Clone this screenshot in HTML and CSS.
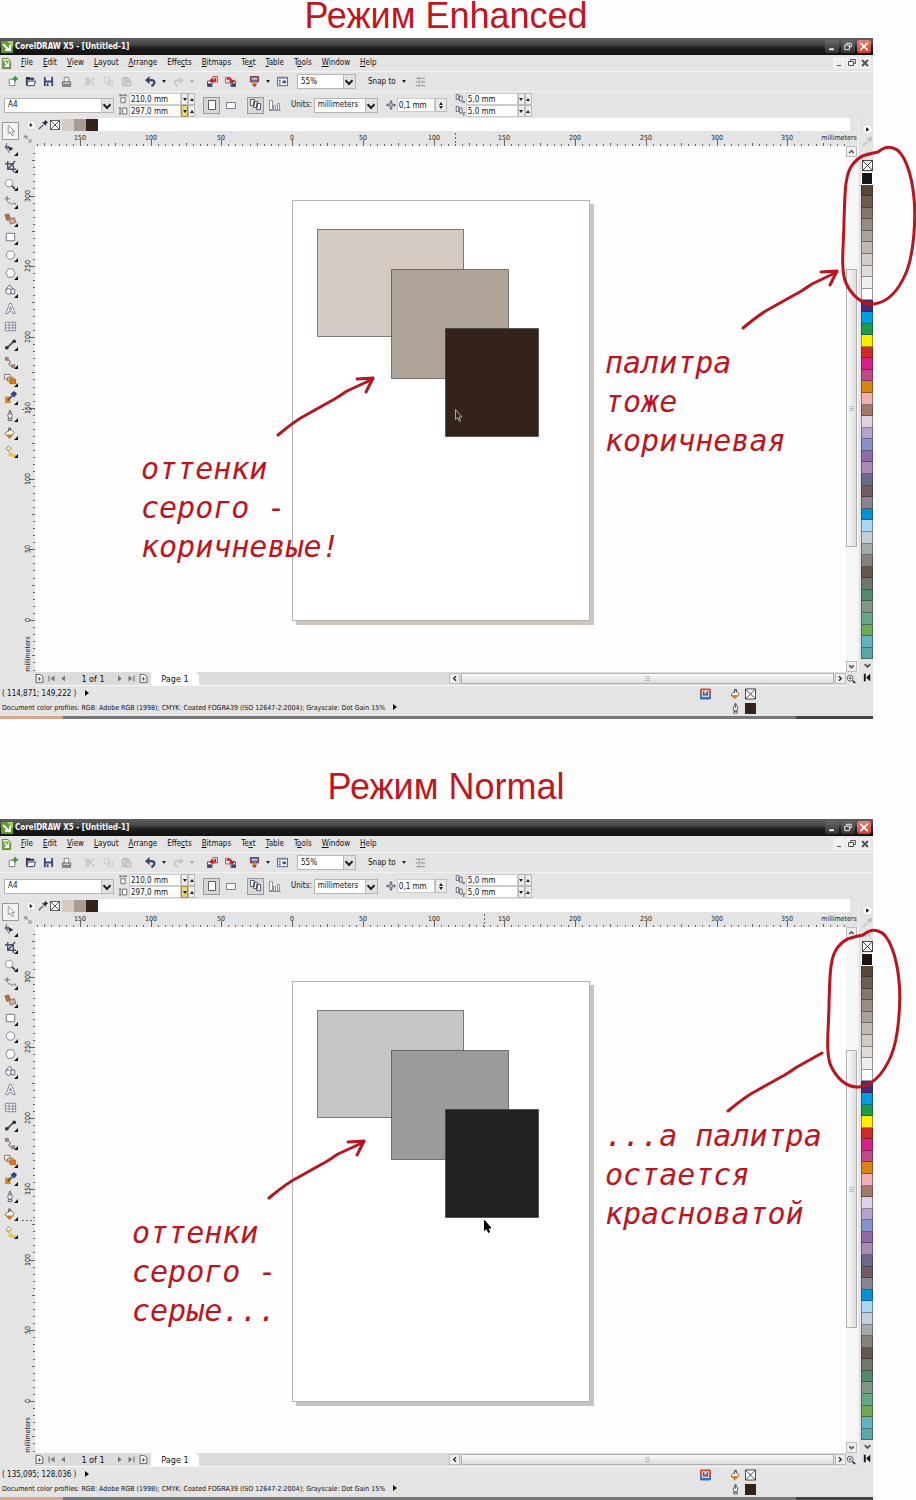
FILE: index.html
```html
<!DOCTYPE html>
<html lang="ru">
<head>
<meta charset="utf-8">
<meta name="viewport" content="width=device-width, initial-scale=1">
<title>CorelDRAW X5: Enhanced / Normal</title>
<link rel="stylesheet" href="styles.css">
</head>
<body>
<svg class="sprite" aria-hidden="true">
  <symbol id="i-app" viewBox="0 0 12 12"><path fill="#5f9a2c" d="M0 0h12v12H0z"/><path fill="#a8d36b" d="M6 0h6v7z"/><path fill="none" stroke="#fff" stroke-width="2" d="M2 3l6 6M9 4v5H4"/></symbol>
  <symbol id="i-doc" viewBox="0 0 12 12"><path fill="#dcebc8" stroke="#5c7a3a" d="M1.500 .5h6l3 3v8h-9z"/><path fill="#6fa83a" d="M2 3h6l2 3v5H2z"/><path fill="none" stroke="#fff" stroke-width="1.500" d="M4 4l3 4M8 5v4H4"/></symbol>
  <symbol id="i-new" viewBox="0 0 12 12"><path fill="#fff" stroke="#777" d="M2.500 3.500h6v7h-6z"/><path fill="#2f9c3a" d="M8 0h2v2h2v2h-2v2H8V4H6V2h2z"/></symbol>
  <symbol id="i-open" viewBox="0 0 12 12"><path fill="#2c3350" d="M1 1h4l1 1h4v2H3l-1 6H1z"/><path fill="#f5f6fa" stroke="#2c3350" d="M3.500 5.500h8l-1.500 5H2z"/></symbol>
  <symbol id="i-save" viewBox="0 0 12 12"><path fill="#3d4670" d="M1 1h10v10H1z"/><path fill="#e9ebf2" d="M3 1h6v4H3zM3 7h6v4H3z"/><path fill="#3d4670" d="M4 8h2v3H4z"/></symbol>
  <symbol id="i-print" viewBox="0 0 12 12"><path fill="#fff" stroke="#777" d="M3.500 6.500v-5h5v5"/><path fill="#cfcfcf" stroke="#555" d="M1.500 6.500h9v3h-9z"/><path stroke="#333" d="M1 11h10"/></symbol>
  <symbol id="i-cut" viewBox="0 0 12 12"><g fill="none" stroke="#c4c4c4" stroke-width="1.500"><path d="M3 7l7-5M3 4l7 6"/><circle cx="2.500" cy="3.500" r="1.500"/><circle cx="2.500" cy="8.500" r="1.500"/></g></symbol>
  <symbol id="i-copy" viewBox="0 0 12 12"><g fill="#e4e4e4" stroke="#c8c8c8"><path d="M1.500 1.500h5v6h-5zM5.500 4.500h5v6h-5z"/><path d="M7 6.500h2M7 8.500h2"/></g></symbol>
  <symbol id="i-paste" viewBox="0 0 12 12"><path fill="#d0d0d0" stroke="#b5b5b5" d="M1.500 2.500h7v8h-7z"/><path fill="#e8e8e8" stroke="#aaa" d="M5.500 5.500h5v5h-5z"/><path stroke="#aaa" d="M3 1.500h4M7 7.500h2"/></symbol>
  <symbol id="i-undo" viewBox="0 0 12 12"><path fill="none" stroke="#3c4568" stroke-width="2.500" d="M4 4.500h3q4 0 3 3.500-.5 2-3 3"/><path fill="#3c4568" d="M0 4.500L5 0v9z"/></symbol>
  <symbol id="i-redo" viewBox="0 0 12 12"><path fill="none" stroke="#c6c6c6" stroke-width="2" d="M8 4.500H5q-4 0-3 3.500 1 2 3 3"/><path fill="#c6c6c6" d="M12 4.500L7 1v7z"/></symbol>
  <symbol id="i-import" viewBox="0 0 12 12"><path fill="#fff" stroke="#3c4568" d="M.5 5.500h5v6h-5z"/><path fill="#3c4568" d="M1 8h4v3H1z"/><path fill="#fff" stroke="#b33" d="M6.500 .5h5v6h-5z"/><path fill="none" stroke="#c8202a" stroke-width="2" d="M9 2v3H4M6 3L4 5l2 2"/></symbol>
  <symbol id="i-export" viewBox="0 0 12 12"><path fill="#fff" stroke="#b33" d="M.5 1.500h5v6h-5z"/><path fill="#fff" stroke="#3c4568" d="M6.500 5.500h5v6h-5z"/><path fill="#3c4568" d="M7 8h4v3H7z"/><path fill="none" stroke="#c8202a" stroke-width="2" d="M2 4q4-3 6 2M5.500 5.500L8 7l2-2.500"/></symbol>
  <symbol id="i-launch" viewBox="0 0 12 12"><path fill="#4a6fc0" stroke="#8b2a2a" d="M1.500 .5h9v6h-9z"/><path fill="#b5c8ee" d="M3 2h6v2H3z"/><path fill="#e58a1e" d="M4 6h4v3H4z"/><path fill="#c8202a" d="M3 9h6l-3 3z"/></symbol>
  <symbol id="i-welcome" viewBox="0 0 12 12"><path fill="#fff" stroke="#4a5480" d="M.5 1.500h11v9H.5z"/><path fill="#7d86ad" d="M1 1h10v2H1z"/><path fill="#4a5480" d="M6 5h4v3H6zM2 4h2v2H2zM2 7h2v2H2z"/></symbol>
  <symbol id="i-options" viewBox="0 0 12 12"><path fill="none" stroke="#888" d="M1 2.500h3M6 2.500h5M1 6.500h5M8 6.500h3M1 10.500h3M6 10.500h5M4.500 1v4M7.500 5v3M4.500 8v4"/></symbol>
  <symbol id="i-w" viewBox="0 0 12 12"><path fill="#fff" stroke="#555" d="M3.500 4.500h5v6h-5z"/><path stroke="#555" d="M2 1.500h8M2.500 0v3M9.500 0v3"/></symbol>
  <symbol id="i-h" viewBox="0 0 12 12"><path fill="#fff" stroke="#555" d="M5.500 2.500h5v7h-5z"/><path stroke="#555" d="M2.500 2v8M1 2.500h3M1 9.500h3"/></symbol>
  <symbol id="i-portrait" viewBox="0 0 12 12"><path fill="#fff" stroke="#555b70" d="M2.500 1.500h7v9h-7z"/></symbol>
  <symbol id="i-landscape" viewBox="0 0 12 12"><path fill="#fff" stroke="#777b8c" d="M1.500 3.500h9v6h-9z"/></symbol>
  <symbol id="i-pages" viewBox="0 0 12 12"><path fill="#fff" stroke="#555b70" d="M.5 .5h4v6h-4zM3.500 2.500h4v6h-4zM6.500 4.500h4v6h-4z"/></symbol>
  <symbol id="i-bars" viewBox="0 0 12 12"><path fill="#fff" stroke="#8a8e9c" d="M.5 1.500h3v9h-3zM4.500 6.500h2v4h-2zM8.500 4.500h2v6h-2zM0 11.500h12"/></symbol>
  <symbol id="i-nudge" viewBox="0 0 12 12"><path fill="#fff" stroke="#444b66" d="M4.500 4.500h3v3h-3z"/><path fill="#444b66" d="M6 0l2 3H4zM6 12l2-3H4zM0 6l3-2v4zM12 6L9 4v4z"/></symbol>
  <symbol id="i-dupx" viewBox="0 0 12 12"><path fill="#fff" stroke="#444b66" d="M1.500 .5h3v6h-3zM5.500 2.500h3v6h-3z"/><path fill="none" stroke="#444b66" d="M9 8l3 3M12 8l-3 3"/></symbol>
  <symbol id="i-dupy" viewBox="0 0 12 12"><path fill="#fff" stroke="#444b66" d="M1.500 .5h3v6h-3zM5.500 2.500h3v6h-3z"/><path fill="none" stroke="#444b66" d="M9 7l1.500 2L12 7M10.500 9v3"/></symbol>
  <symbol id="i-nocolor" viewBox="0 0 12 12"><path fill="#fff" stroke="#333" d="M.5 .5h11v11H.5zM.5 .5l11 11M11.500 .5l-11 11"/></symbol>
  <symbol id="i-dropper" viewBox="0 0 12 12"><path stroke="#6b7086" stroke-width="2" d="M1 11l5-5"/><path fill="#222a48" d="M5 3l4 4 1-1-1-1 3-2-3-3-2 3-1-1z"/></symbol>
  <symbol id="i-play" viewBox="0 0 12 12"><circle cx="6" cy="6" r="5.500" fill="#fafafa" stroke="#d2d2d2"/><path fill="#111" d="M4.500 3.500L8 6 4.500 8.500z"/></symbol>
  <symbol id="i-origin" viewBox="0 0 12 12"><path fill="none" stroke="#444" d="M1 3.500h6M3.500 1v6M5 5l5 5M7 10.500h4M10.500 7v4" stroke-dasharray="2 1"/></symbol>
  <symbol id="i-addpage" viewBox="0 0 12 12"><path fill="#fff" stroke="#333" d="M1.500 .5h5l4 3v8h-9z"/><path stroke="#333" d="M3.500 6.500h5M6 4v5"/></symbol>
  <symbol id="i-first" viewBox="0 0 12 12"><path fill="#777" d="M2 2h1.500v8H2zM10 2v8L5 6z"/></symbol>
  <symbol id="i-prev" viewBox="0 0 12 12"><path fill="#777" d="M8 2v8L3 6z"/></symbol>
  <symbol id="i-next" viewBox="0 0 12 12"><path fill="#777" d="M4 2v8l5-4z"/></symbol>
  <symbol id="i-last" viewBox="0 0 12 12"><path fill="#777" d="M8.500 2H10v8H8.500zM2 2v8l5-4z"/></symbol>
  <symbol id="i-flip" viewBox="0 0 12 12"><path fill="#111" d="M2 2h2v8H2zM9 2v8L4.500 6z"/></symbol>
  <symbol id="i-up" viewBox="0 0 12 12"><path fill="none" stroke="#555" stroke-width="2" d="M3 8l3-3 3 3"/></symbol>
  <symbol id="i-down" viewBox="0 0 12 12"><path fill="none" stroke="#555" stroke-width="2" d="M3 4.500l3 3 3-3"/></symbol>
  <symbol id="i-left" viewBox="0 0 12 12"><path fill="none" stroke="#333" stroke-width="2" d="M8 3L5 6l3 3"/></symbol>
  <symbol id="i-right" viewBox="0 0 12 12"><path fill="none" stroke="#333" stroke-width="2" d="M4 3l3 3-3 3"/></symbol>
  <symbol id="i-zoom" viewBox="0 0 12 12"><circle cx="5" cy="5" r="3.500" fill="#fff" stroke="#445"/><path stroke="#334" stroke-width="2" d="M8 8l3 3"/><path stroke="#445" d="M3 5h4M5 3v4"/></symbol>
  <symbol id="i-fill" viewBox="0 0 12 12"><path fill="#fff" stroke="#8a5a24" d="M1 7l5-5 4 4-5 5z"/><path fill="#d98324" d="M2 7h8l-5 5z"/><path fill="none" stroke="#444" d="M5 5V1h2v3"/></symbol>
  <symbol id="i-pen" viewBox="0 0 12 12"><path fill="#fff" stroke="#4c5268" d="M6 .5L8.500 6 7.500 9h-3l-1-3zM4 9.500h4v2H4zM6 2v4"/></symbol>
  <symbol id="i-info" viewBox="0 0 12 12"><path fill="#d2442c" d="M1 0h10l1 1v5H0V1z"/><path fill="#3d6fb8" d="M0 6h12v5l-1 1H1l-1-1z"/><path fill="#fff" d="M2 2h8v7H2z"/><path fill="#3355a0" d="M3 3h2v5H3zM7 3h2v5H7z"/><path fill="#d2442c" d="M5 5h2v3H5z"/></symbol>

  <symbol id="t-pick" viewBox="0 0 14 14"><path fill="#fff" stroke="#8b8e99" d="M4.500 1.500v9l2-2 2 4 2-1-2-3.500h3z"/></symbol>
  <symbol id="t-shape" viewBox="0 0 14 14"><path fill="none" stroke="#666b80" d="M3 1q-2 5 3 11"/><path fill="#2c3350" d="M4 4l6 3-4 3z"/><path fill="#fff" stroke="#2c3350" d="M1.500 4.500h2v2h-2z"/></symbol>
  <symbol id="t-crop" viewBox="0 0 14 14"><path fill="none" stroke="#4a516c" stroke-width="1.500" d="M4 1v9h9M1 4h9v9M12 1L4 10"/></symbol>
  <symbol id="t-zoom" viewBox="0 0 14 14"><circle cx="5.500" cy="5.500" r="4" fill="#fff" stroke="#8c90a0"/><path stroke="#444b66" stroke-width="2" d="M8.500 8.500l3.500 3.500"/></symbol>
  <symbol id="t-free" viewBox="0 0 14 14"><path fill="none" stroke="#666b80" d="M3.500 0v6M.5 3h6M4 8q2-2 3 0t3 0 3 2"/></symbol>
  <symbol id="t-smart" viewBox="0 0 14 14"><path fill="#c06a3a" stroke="#7c6a62" d="M1 2l4-1 2 5-4 2z"/><path fill="#d9a98a" stroke="#84716a" d="M5 7l6-2 2 5-6 2z"/></symbol>
  <symbol id="t-rect" viewBox="0 0 14 14"><path fill="#fff" stroke="#6c7082" d="M2.500 2.500h9v8h-9z"/></symbol>
  <symbol id="t-ellipse" viewBox="0 0 14 14"><circle cx="7" cy="6.500" r="4.500" fill="#fff" stroke="#7c8092"/></symbol>
  <symbol id="t-poly" viewBox="0 0 14 14"><path fill="#fff" stroke="#7c8092" d="M4.500 2h5L12 6.500 9.500 11h-5L2 6.500z"/></symbol>
  <symbol id="t-basic" viewBox="0 0 14 14"><path fill="#fff" stroke="#5c6178" d="M6 1l4 5H2z"/><circle cx="5" cy="8" r="3" fill="#fff" stroke="#5c6178"/><path fill="#fff" stroke="#5c6178" d="M7.500 5.500h4v5h-4z"/></symbol>
  <symbol id="t-text" viewBox="0 0 14 14"><path fill="#fff" stroke="#777c92" d="M6 1.500h2l4 11H9.500L8.500 10h-3l-1 2.500H2zM7 5L6 8h2z"/></symbol>
  <symbol id="t-table" viewBox="0 0 14 14"><path fill="#fff" stroke="#7c8098" d="M1.500 2.500h11v9h-11zM2 5.500h10M2 8.500h10M5.500 3v8M9.500 3v8"/></symbol>
  <symbol id="t-dim" viewBox="0 0 14 14"><path stroke="#555" stroke-width="2" d="M3 11l8-8"/><circle cx="3" cy="10.500" r="2" fill="#333"/><circle cx="11" cy="3.500" r="2" fill="#333"/></symbol>
  <symbol id="t-conn" viewBox="0 0 14 14"><path fill="none" stroke="#555" d="M3 3l4 3-2 3 4 3"/><path fill="#d88a5a" stroke="#777" d="M1.500 1.500h3v3h-3zM8.500 9.500h3v3h-3z"/></symbol>
  <symbol id="t-blend" viewBox="0 0 14 14"><path fill="#fff" stroke="#866" d="M.5 1.500h6v5h-6z"/><path fill="#f0b860" stroke="#966" d="M3.500 4.500h6v4h-6z"/><path fill="#d97a10" stroke="#b56a10" d="M6.500 6.500h6v5h-6z"/></symbol>
  <symbol id="t-drop" viewBox="0 0 14 14"><path fill="#e08a1a" d="M1 6h6v7H1z"/><path stroke="#556" stroke-width="2" d="M4 10l5-5"/><path fill="#27408b" d="M7 3l4 4 3-4-3-3z"/></symbol>
  <symbol id="t-outline" viewBox="0 0 14 14"><path fill="#fff" stroke="#555a70" d="M6.500 1L9 7l-1 3H5L4 7zM4.500 10.500h4v2h-4zM6.500 3v4"/></symbol>
  <symbol id="t-fill" viewBox="0 0 14 14"><path fill="#fff" stroke="#8a5a24" d="M1 7l6-5 4 4-5 6z"/><path fill="#c87a2a" d="M2 8h8l-4 5z"/><path fill="none" stroke="#555" d="M5 5V1h2v3"/></symbol>
  <symbol id="t-ifill" viewBox="0 0 14 14"><path fill="#fff" stroke="#777" d="M2 4l3-3 3 3-3 3z"/><path fill="#e7c34a" d="M2 4h6L5 7zM5 8h4v4H5zM9 10h4v3H9z"/></symbol>
</svg>

<main class="comparison">
  <section class="mode">
    <h1 class="mode-title">Режим Enhanced</h1>
    <div class="stage">
      <div class="window" data-theme="warm" data-coords="( 114,871; 149,222 )" data-cursor-x="420" data-cursor-y="263" data-cursor-style="light"></div>
      <svg class="marks" aria-hidden="true">
        <path d="M878 114C868 116 860 117 853 126C844 136 845 160 844 182C844 205 840 232 846 245C851 256 861 267 874 266C890 264 900 249 906 235C914 216 916 180 914 160C912 138 905 113 893 110C886 108 882 111 878 114"/>
        <path d="M278 397C289 388 296 382 306 377L331 363C337 360 342 356 347 353L373 341M357 341L373 340L366 354"/>
        <path d="M743 290C754 281 761 275 771 270L796 256C802 253 807 249 812 246L837 234M821 234L837 233L830 247"/>
      </svg>
      <p class="note note-shades">оттенки<br>серого -<br>коричневые!</p>
      <p class="note note-palette">палитра<br>тоже<br>коричневая</p>
    </div>
  </section>

  <section class="mode mode-normal">
    <h2 class="mode-title">Режим Normal</h2>
    <div class="stage">
      <div class="window" data-theme="neutral" data-coords="( 135,095; 128,036 )" data-cursor-x="449" data-cursor-y="293" data-cursor-style="dark"></div>
      <svg class="marks" aria-hidden="true">
        <path d="M863 116C853 118 845 119 838 128C829 138 830 162 829 184C829 207 825 234 831 247C836 258 846 269 859 268C875 266 885 251 891 237C899 218 901 182 899 162C897 140 890 115 878 112C871 110 867 113 863 116"/>
        <path d="M269 379C280 370 287 364 297 359L322 345C328 342 333 338 338 335L364 323M348 323L364 322L357 336"/>
        <path d="M728 292C739 283 746 277 756 272L781 258C787 255 792 251 797 248L822 234"/>
      </svg>
      <p class="note note-shades">оттенки<br>серого -<br>серые...</p>
      <p class="note note-palette">...а палитра<br>остается<br>красноватой</p>
    </div>
  </section>
</main>

<template id="window-template">
  <header class="titlebar">
    <svg class="app-icon"><use href="#i-app"/></svg>
    <span class="titlebar-text">CorelDRAW X5 - [Untitled-1]</span>
    <button class="win-btn" aria-label="Minimize"><svg viewBox="0 0 12 12"><path fill="#fff" d="M3 8h5v2H3z"/></svg></button>
    <button class="win-btn" aria-label="Restore"><svg viewBox="0 0 12 12"><path fill="none" stroke="#fff" d="M4.500 4V2.500h5v4H8M2.500 4.500h5v5h-5z"/></svg></button>
    <button class="win-btn win-close" aria-label="Close"><svg viewBox="0 0 12 12"><path stroke="#fff" stroke-width="2" d="M2 2l8 8M10 2l-8 8"/></svg></button>
  </header>

  <nav class="menubar">
    <svg class="doc-icon"><use href="#i-doc"/></svg>
    <button><u>F</u>ile</button><button><u>E</u>dit</button><button><u>V</u>iew</button><button><u>L</u>ayout</button><button><u>A</u>rrange</button><button>Effe<u>c</u>ts</button><button><u>B</u>itmaps</button><button>Te<u>x</u>t</button><button><u>T</u>able</button><button>T<u>o</u>ols</button><button><u>W</u>indow</button><button><u>H</u>elp</button>
    <span class="doc-controls">
      <button aria-label="Minimize document"><svg viewBox="0 0 12 12"><path stroke="#555" d="M4 8.500h4"/></svg></button>
      <button aria-label="Restore document"><svg viewBox="0 0 12 12"><path fill="none" stroke="#555" d="M4.500 4V2.500h5v4H8M2.500 4.500h5v4h-5z"/></svg></button>
      <button aria-label="Close document"><svg viewBox="0 0 12 12"><path stroke="#555" stroke-width="2" d="M3 3l6 6M9 3l-6 6"/></svg></button>
    </span>
  </nav>

  <div class="toolbar">
    <div class="group" data-icons="new open save print"></div>
    <div class="group" data-icons="cut copy paste"></div>
    <div class="group" data-icons="undo caret redo caret-off"></div>
    <div class="group" data-icons="import export"></div>
    <div class="group" data-icons="launch caret welcome"></div>
    <label class="combo combo-zoom"><select aria-label="Zoom level"><option>55%</option></select></label>
    <button class="snap">Snap to <i class="tri tri-down"></i></button>
    <div class="group" data-icons="options"></div>
  </div>

  <div class="propbar">
    <label class="combo combo-paper"><select aria-label="Paper size"><option>A4</option></select></label>
    <div class="fields">
      <label class="field"><svg><use href="#i-w"/></svg><input type="text" value="210,0 mm" aria-label="Page width"><span class="spin"><i class="tri tri-down"></i></span><span class="spin"><i class="tri tri-up"></i></span></label>
      <label class="field"><svg><use href="#i-h"/></svg><input type="text" value="297,0 mm" aria-label="Page height"><span class="spin spin-hot"><i class="tri tri-down"></i></span><span class="spin"><i class="tri tri-up"></i></span></label>
    </div>
    <div class="toggles">
      <button class="toggle is-on" aria-label="Portrait"><svg><use href="#i-portrait"/></svg></button>
      <button class="toggle" aria-label="Landscape"><svg><use href="#i-landscape"/></svg></button>
    </div>
    <div class="toggles">
      <button class="toggle is-on" aria-label="All pages"><svg><use href="#i-pages"/></svg></button>
      <button class="toggle" aria-label="Current page"><svg><use href="#i-bars"/></svg></button>
    </div>
    <label class="units">Units: <span class="combo combo-units"><select><option>millimeters</option></select></span></label>
    <label class="field field-nudge"><svg><use href="#i-nudge"/></svg><input type="text" value="0,1 mm" aria-label="Nudge distance"><span class="spin-stack"><i class="tri tri-up"></i><i class="tri tri-down"></i></span></label>
    <div class="fields fields-offset">
      <label class="field"><svg><use href="#i-dupx"/></svg><input type="text" value="5,0 mm" aria-label="Duplicate offset X"><span class="spin"><i class="tri tri-down"></i></span><span class="spin"><i class="tri tri-up"></i></span></label>
      <label class="field"><svg><use href="#i-dupy"/></svg><input type="text" value="5,0 mm" aria-label="Duplicate offset Y"><span class="spin"><i class="tri tri-down"></i></span><span class="spin"><i class="tri tri-up"></i></span></label>
    </div>
  </div>

  <div class="workspace">
    <div class="toolbox"></div>
    <div class="doc-palette">
      <svg><use href="#i-play"/></svg><svg><use href="#i-dropper"/></svg><svg><use href="#i-nocolor"/></svg>
      <span class="chips"><i class="chip chip-light"></i><i class="chip chip-mid"></i><i class="chip chip-dark"></i></span>
    </div>
    <div class="ruler-corner"><svg><use href="#i-origin"/></svg></div>
    <svg class="ruler-x"></svg>
    <svg class="ruler-y"></svg>
    <div class="canvas"><svg class="drawing"></svg></div>
    <div class="scroll-y">
      <button aria-label="Scroll up"><svg><use href="#i-up"/></svg></button>
      <div class="track"><div class="thumb"></div></div>
      <button aria-label="Scroll down"><svg><use href="#i-down"/></svg></button>
    </div>
    <div class="pagebar">
      <button aria-label="Add page before"><svg><use href="#i-addpage"/></svg></button>
      <button aria-label="First page"><svg><use href="#i-first"/></svg></button>
      <button aria-label="Previous page"><svg><use href="#i-prev"/></svg></button>
      <span class="page-count">1 of 1</span>
      <button aria-label="Next page"><svg><use href="#i-next"/></svg></button>
      <button aria-label="Last page"><svg><use href="#i-last"/></svg></button>
      <button aria-label="Add page after"><svg><use href="#i-addpage"/></svg></button>
      <button class="page-tab">Page 1</button>
      <div class="scroll-x">
        <button aria-label="Scroll left"><svg><use href="#i-left"/></svg></button>
        <div class="thumb"></div>
        <button aria-label="Scroll right"><svg><use href="#i-right"/></svg></button>
      </div>
    </div>
    <button class="navigator" aria-label="Navigator"><svg><use href="#i-zoom"/></svg></button>
    <div class="palette">
      <svg><use href="#i-play"/></svg>
      <svg class="faded"><use href="#i-dropper"/></svg>
      <svg class="faded"><use href="#i-up"/></svg>
      <svg><use href="#i-nocolor"/></svg>
      <div class="swatches"></div>
      <svg><use href="#i-down"/></svg>
      <svg><use href="#i-flip"/></svg>
    </div>
  </div>

  <footer class="status">
    <div class="status-text">
      <p><span class="coords"></span> <i class="tri tri-right"></i></p>
      <p class="profiles">Document color profiles: RGB: Adobe RGB (1998); CMYK: Coated FOGRA39 (ISO 12647-2:2004); Grayscale: Dot Gain 15% <i class="tri tri-right"></i></p>
    </div>
    <div class="status-icons">
      <svg><use href="#i-info"/></svg><svg><use href="#i-fill"/></svg><svg><use href="#i-nocolor"/></svg>
      <span></span><svg><use href="#i-pen"/></svg><i class="outline-color"></i>
    </div>
  </footer>
  <div class="taskbar"></div>
</template>
<script src="script.js"></script>
</body>
</html>
```

FILE: styles.css
```css
* { box-sizing: border-box; }

body {
  margin: 0;
  background: #fefefe;
  color: #111;
  font-family: "DejaVu Sans Condensed", "Noto Sans", sans-serif;
  font-size: 8px;
  line-height: 12px;
  overflow-x: hidden;
}

button, input, select {
  margin: 0;
  padding: 0;
  border: 0;
  background: none;
  color: inherit;
  font: inherit;
}

svg { display: block; }
p, h1, h2 { margin: 0; }
.sprite { display: none; }

/* Headings */
.mode-title {
  height: 38px;
  padding-right: 24px;
  color: #c1161d;
  font: 400 36px/32px "Liberation Sans", Arial, sans-serif;
  text-align: center;
}
.mode-normal { padding-top: 52px; }
.mode-normal .mode-title { height: 48px; }

/* Window frame */
.stage { position: relative; }
.window {
  --light: #d3cac4;
  --mid: #b0a398;
  --dark: #33231b;
  --shadow: #cfc5bf;
  margin-right: 43px;
  background: #e4e4e4;
}
.window[data-theme="neutral"] {
  --light: #c6c6c6;
  --mid: #9b9b9b;
  --dark: #21211f;
  --shadow: #c4c4c4;
}

.titlebar {
  display: flex;
  align-items: center;
  gap: 2px;
  height: 17px;
  padding: 0 2px 0 1px;
  background: linear-gradient(#5e5e5e, #4a4a4a 35%, #1c1c1c 60%, #111);
  color: #fff;
}
.app-icon { width: 12px; height: 12px; }
.titlebar-text { flex: 1; font-weight: 700; }
.win-btn {
  width: 14px;
  height: 13px;
  padding: 1px;
  border-radius: 2px;
  background: linear-gradient(#666, #333);
}
.win-btn svg { width: 12px; height: 11px; }
.win-close { background: linear-gradient(#e88070, #d5402c); }

.menubar {
  display: flex;
  align-items: center;
  gap: 10px;
  height: 17px;
  padding: 0 2px 0 1px;
  border-bottom: 1px solid #f4f4f4;
}
.doc-icon { width: 11px; height: 11px; margin-right: -1px; }
.doc-controls { display: flex; gap: 1px; margin-left: auto; }
.doc-controls button { background: #f0f0f0; }
.doc-controls svg { width: 12px; height: 12px; }

.toolbar {
  display: flex;
  align-items: center;
  gap: 6px;
  height: 20px;
  padding-left: 3px;
  border-bottom: 1px solid #f0f0f0;
}
.group { display: flex; align-items: center; }
.icon-btn { display: grid; place-items: center; width: 18px; height: 16px; }
.icon-btn svg { width: 11px; height: 11px; }
.caret { display: grid; place-items: center; width: 10px; height: 16px; }
.caret-off { opacity: .3; }
.snap { margin-left: 6px; }

.tri { display: inline-block; border: 2px solid transparent; }
.tri-down { border-top: 3px solid #222; border-bottom: 0; }
.tri-up { border-bottom: 3px solid #222; border-top: 0; }
.tri-right { margin-left: 6px; border: 3px solid transparent; border-left: 4px solid #111; border-right: 0; }
.snap .tri { margin-left: 4px; vertical-align: 1px; }

.combo { position: relative; display: block; height: 15px; }
.combo select {
  width: 100%;
  height: 100%;
  padding-left: 3px;
  border: 1px solid #b4b4b4;
  background: #fff;
  appearance: none;
}
.combo::before {
  position: absolute;
  top: 1px;
  right: 1px;
  bottom: 1px;
  width: 11px;
  border-left: 1px solid #bbb;
  background: #e2e2e2;
  content: "";
  pointer-events: none;
}
.combo::after {
  position: absolute;
  top: 4px;
  right: 4px;
  width: 4px;
  height: 4px;
  border: solid #222;
  border-width: 0 2px 2px 0;
  content: "";
  pointer-events: none;
  transform: rotate(45deg);
}
.combo-zoom { width: 59px; }
.combo-paper { width: 110px; }
.combo-units { width: 64px; }

.propbar {
  display: flex;
  align-items: center;
  gap: 8px;
  height: 26px;
  padding-left: 4px;
}
.fields { display: grid; gap: 0; }
.combo-paper + .fields { margin-left: -4px; }
.field { display: flex; align-items: center; height: 12px; }
.field svg { width: 10px; height: 10px; margin-right: 1px; }
.field input {
  width: 52px;
  height: 12px;
  padding-left: 1px;
  border: 1px solid #ccc;
  background: #fff;
  line-height: 10px;
}
.spin {
  display: grid;
  place-items: center;
  width: 7px;
  height: 12px;
  border: 1px solid #bbb;
  background: #ececec;
}
.spin-hot { background: #e8d67a; border-color: #a8902c; }
.field-nudge { height: 14px; }
.field-nudge input { width: 38px; height: 14px; line-height: 12px; }
.spin-stack {
  display: grid;
  place-items: center;
  width: 12px;
  height: 14px;
  padding: 2px 0;
  border: 1px solid #bbb;
  background: #ececec;
}
.toggles { display: flex; gap: 2px; }
.toggle {
  display: grid;
  place-items: center;
  width: 17px;
  height: 17px;
}
.toggle svg { width: 12px; height: 12px; }
.toggle.is-on { border: 1px solid #999; background: #d6d6d6; }
.units { display: flex; align-items: center; gap: 2px; }

/* Workspace */
.workspace {
  display: grid;
  grid-template-columns: 20px 15px 1fr 12px 15px;
  grid-template-rows: 13px 15px minmax(526px, auto) 14px;
}
.toolbox {
  grid-row: 1 / -1;
  display: grid;
  grid-auto-rows: 1fr;
  height: 342px;
  padding: 4px 0 0 2px;
}
.tool {
  position: relative;
  display: grid;
  place-items: center;
  width: 17px;
}
.tool svg { width: 13px; height: 13px; }
.tool.is-on { border: 1px solid #999; background: #f2f2f2; }
.tool.has-flyout::after {
  position: absolute;
  right: 1px;
  bottom: 2px;
  border: 2px solid transparent;
  border-right-color: #111;
  border-bottom-color: #111;
  content: "";
}

.doc-palette {
  grid-column: 2 / 5;
  display: flex;
  align-items: center;
  gap: 2px;
  padding-left: 6px;
  border-right: 8px solid #e4e4e4;
  background: linear-gradient(90deg, #e4e4e4 76px, #fff 76px);
}
.doc-palette svg { width: 10px; height: 10px; }
.chips { display: flex; }
.chip { width: 12px; height: 12px; }
.chip-light { background: #d3cac4; }
.chip-mid { background: #a99c92; }
.chip-dark { background: #33231b; }

.ruler-corner { grid-area: 2 / 2; padding: 3px; }
.ruler-corner svg { width: 9px; height: 9px; }
.ruler-x { grid-area: 2 / 3 / 3 / 5; width: 100%; height: 15px; }
.ruler-y { grid-area: 3 / 2; width: 15px; height: 100%; }
.ruler-x line, .ruler-y line { stroke: #666; shape-rendering: crispEdges; }
.ruler-x text, .ruler-y text { fill: #222; font-size: 7px; text-anchor: middle; }
.ruler-x .cursor-mark, .ruler-y .cursor-mark { stroke-dasharray: 2 2; }

.canvas {
  position: relative;
  grid-area: 3 / 3;
  overflow: hidden;
  background: #fefefe;
}
.drawing { position: absolute; inset: 0; width: 100%; height: 100%; }
.sheet { fill: #fff; stroke: #b5b5b5; }
.sheet-shadow { fill: var(--shadow); }
.shape { stroke: #333; stroke-opacity: .6; }
.shape-light { fill: var(--light); }
.shape-mid { fill: var(--mid); }
.shape-dark { fill: var(--dark); }
.cursor-light { fill: #33231b; stroke: #aaa; }
.cursor-dark { fill: #000; stroke: #000; }

.scroll-y {
  grid-area: 3 / 4;
  display: flex;
  flex-direction: column;
  background: #f6f6f6;
}
.scroll-y button, .scroll-x button {
  width: 11px;
  height: 11px;
  border: 1px solid #bbb;
  background: #eee;
}
.scroll-y svg, .scroll-x svg { width: 9px; height: 9px; }
.track { flex: 1; padding-top: 112px; }
.thumb {
  display: grid;
  place-items: center;
  border: 1px solid #b0b0b0;
  background: linear-gradient(90deg, #fafafa, #ddd);
}
.thumb::after {
  width: 5px;
  height: 5px;
  background: repeating-linear-gradient(#bbb 0 1px, transparent 1px 2px);
  content: "";
}
.track .thumb { width: 11px; height: 278px; }

.pagebar {
  grid-area: 4 / 3 / 5 / 4;
  display: flex;
  align-items: center;
  border-bottom: 1px solid #f8f8f8;
  background: #dcdcdc;
}
.pagebar > button svg { width: 9px; height: 9px; }
.pagebar > button { width: 12px; }
.page-count { width: 44px; font-size: 9px; text-align: center; }
.pagebar > .page-tab {
  width: 48px;
  height: 13px;
  border-radius: 0 5px 0 0;
  background: #fff;
  font-size: 9px;
}
.scroll-x {
  display: flex;
  gap: 1px;
  width: 49%;
  margin-left: auto;
}
.scroll-x .thumb { flex: 1; background: linear-gradient(#fafafa, #ddd); }
.navigator { grid-area: 4 / 4; }
.navigator svg { width: 10px; height: 10px; }

.palette {
  grid-area: 1 / 5 / 5 / 6;
  display: flex;
  flex-direction: column;
  align-items: center;
  gap: 1px;
  padding: 6px 0 3px 2px;
  border-left: 1px solid #eee;
}
.palette svg { flex: none; width: 11px; height: 11px; }
.palette .faded { opacity: .2; }
.swatches {
  flex: 1;
  display: flex;
  flex-direction: column;
  width: 12px;
}
.swatch { flex: 1; border: 1px solid rgba(40, 30, 30, .45); border-top: 0; }
.swatch:first-child { border: 1px solid #fff; }

/* Status */
.status {
  display: flex;
  justify-content: space-between;
  height: 30px;
  padding: 1px 116px 0 2px;
}
.status-text p { height: 14px; line-height: 14px; white-space: nowrap; }
.status-text .profiles { font-size: 7px; }
.status-icons {
  display: grid;
  grid-template-columns: 30px 15px 12px;
  align-content: start;
  align-items: center;
  gap: 2px 0;
  padding-top: 1px;
}
.status-icons svg { width: 11px; height: 12px; }
.outline-color { width: 11px; height: 11px; background: #33231b; }
.taskbar {
  height: 3px;
  background: linear-gradient(90deg, #dba78c 63px, #777 63px 796px, #444 796px);
}

/* Handwritten remarks over the windows */
.marks {
  position: absolute;
  top: 0;
  left: 0;
  width: 916px;
  height: 100%;
  overflow: visible;
  pointer-events: none;
}
.marks path {
  fill: none;
  stroke: #b9151e;
  stroke-width: 3;
  stroke-linecap: round;
  stroke-linejoin: round;
}
.note {
  position: absolute;
  color: #bd151d;
  font: italic 400 30px/39px "DejaVu Sans Mono", "Liberation Mono", monospace;
  white-space: nowrap;
}
.note-shades { top: 411px; left: 141px; }
.note-palette { top: 305px; left: 605px; }
.mode-normal .note-shades { top: 394px; left: 132px; }
.mode-normal .note-palette { top: 297px; left: 605px; }
```

FILE: script.js
```js
const PX_PER_MM = 1.415;
const ORIGIN = { x: 257, y: 474 };

const SWATCHES = [
  "#1c1511", "#5a4636", "#6e5e52", "#85776b", "#998c80", "#ada299", "#c1b8b1",
  "#d1cbc6", "#e0dcd8", "#f0eeec", "#ffffff", "#4b2a7c", "#009ee0", "#1f9a48",
  "#ffed00", "#cf2a28", "#d6218a", "#bf4a87", "#d98316", "#f0afb4", "#a07b68",
  "#dfd0e6", "#b5a1cd", "#8593cb", "#9069ab", "#a98bb5", "#6a6990", "#755766",
  "#85868f", "#0093d3", "#a9d8f7", "#c3cfd6", "#a3acab", "#87827b", "#64574e",
  "#6d7a6b", "#528a6c", "#819683", "#65a886", "#70a956", "#62b3c0", "#5aa8a5"
];

const TOOLS = [
  ["pick", "Pick"], ["shape", "Shape"], ["crop", "Crop"], ["zoom", "Zoom"],
  ["free", "Freehand"], ["smart", "Smart fill"], ["rect", "Rectangle"],
  ["ellipse", "Ellipse"], ["poly", "Polygon"], ["basic", "Basic shapes"],
  ["text", "Text"], ["table", "Table"], ["dim", "Dimension"],
  ["conn", "Connector"], ["blend", "Blend"], ["drop", "Eyedropper"],
  ["outline", "Outline"], ["fill", "Fill"], ["ifill", "Interactive fill"]
];
const NO_FLYOUT = new Set(["pick", "text", "table"]);

function tickLength(mm) {
  if (mm % 50 === 0) return 6;
  return mm % 25 === 0 ? 3 : 2;
}

function rulerX(cursor) {
  let out = "";
  for (let mm = -180; mm <= 390; mm += 5) {
    const x = Math.round(ORIGIN.x + mm * PX_PER_MM);
    out += `<line x1="${x}" x2="${x}" y1="${15 - tickLength(mm)}" y2="15"/>`;
    if (mm % 50 === 0 && mm <= 350) out += `<text x="${x}" y="9">${Math.abs(mm)}</text>`;
  }
  out += `<line class="cursor-mark" x1="${cursor}" x2="${cursor}" y1="2" y2="15"/>`;
  return out + `<text x="804" y="9">millimeters</text>`;
}

function rulerY(cursor) {
  let out = "";
  for (let mm = -35; mm <= 330; mm += 5) {
    const y = Math.round(ORIGIN.y - mm * PX_PER_MM);
    out += `<line y1="${y}" y2="${y}" x1="${15 - tickLength(mm)}" x2="15"/>`;
    if (mm % 50 === 0) out += `<text transform="translate(10 ${y}) rotate(-90)">${mm}</text>`;
  }
  out += `<line class="cursor-mark" y1="${cursor}" y2="${cursor}" x1="2" x2="15"/>`;
  return out + `<text transform="translate(10 508) rotate(-90)">millimeters</text>`;
}

function drawing(x, y, style) {
  return `
    <rect class="sheet-shadow" x="261" y="58" width="298" height="421"/>
    <rect class="sheet" x="257.500" y="54.500" width="297" height="420"/>
    <rect class="shape shape-light" x="282.500" y="83.500" width="146" height="107"/>
    <rect class="shape shape-mid" x="356.500" y="123.500" width="117" height="109"/>
    <rect class="shape shape-dark" x="410.500" y="182.500" width="93" height="108"/>
    <path class="cursor-${style}" transform="translate(${x} ${y})" d="M.5 .5v10l2-2 2 4 1-.5-1.500-4h3z"/>`;
}

function toolbarItem(name) {
  if (name.startsWith("caret")) {
    return `<button class="caret ${name}" aria-label="More"><i class="tri tri-down"></i></button>`;
  }
  return `<button class="icon-btn" aria-label="${name}"><svg><use href="#i-${name}"/></svg></button>`;
}

function toolItem([id, label], index) {
  const state = (index === 0 ? " is-on" : "") + (NO_FLYOUT.has(id) ? "" : " has-flyout");
  return `<button class="tool${state}" aria-label="${label}"><svg><use href="#t-${id}"/></svg></button>`;
}

const template = document.getElementById("window-template");

document.querySelectorAll(".window").forEach((win) => {
  const { coords, cursorX, cursorY, cursorStyle } = win.dataset;
  win.append(template.content.cloneNode(true));
  const find = (selector) => win.querySelector(selector);

  win.querySelectorAll("[data-icons]").forEach((group) => {
    group.innerHTML = group.dataset.icons.split(" ").map(toolbarItem).join("");
  });
  find(".toolbox").innerHTML = TOOLS.map(toolItem).join("");
  find(".ruler-x").innerHTML = rulerX(cursorX);
  find(".ruler-y").innerHTML = rulerY(cursorY);
  find(".drawing").innerHTML = drawing(cursorX, cursorY, cursorStyle);
  find(".swatches").innerHTML = SWATCHES
    .map((color) => `<i class="swatch" style="background-color:${color}"></i>`).join("");
  find(".coords").textContent = coords;
});
```
